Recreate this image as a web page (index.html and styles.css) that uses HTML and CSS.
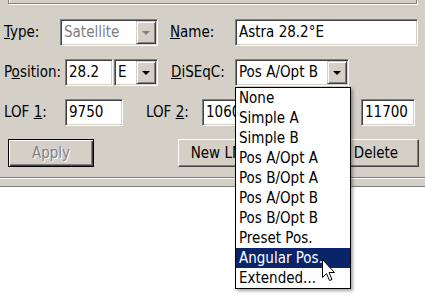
FILE: index.html
```html
<!DOCTYPE html>
<html lang="en">
<head>
  <meta charset="UTF-8" />
  <title>Satellite Settings</title>
  <link rel="stylesheet" href="styles.css">
</head>
<body>
  <div class="panel">
    <div class="topbox"></div>

    <div class="form">
      <div class="row">
        <label class="lbl w-type"><u>T</u>ype:</label>
        <div class="combo disabled c-type">
          <span class="val">Satellite</span>
          <span class="drop"><i class="arrow"></i></span>
        </div>
        <label class="lbl w-name"><u>N</u>ame:</label>
        <div class="edit e-name">Astra 28.2°E</div>
      </div>

      <div class="row">
        <label class="lbl w-pos">P<u>o</u>sition:</label>
        <div class="edit e-pos">28.2</div>
        <div class="combo c-dir">
          <span class="val">E</span>
          <span class="drop"><i class="arrow"></i></span>
        </div>
        <label class="lbl w-diseqc"><u>D</u>iSEqC:</label>
        <div class="combo c-diseqc">
          <span class="val">Pos A/Opt B</span>
          <span class="drop"><i class="arrow"></i></span>
        </div>
      </div>

      <div class="row">
        <label class="lbl w-pos">LOF <u>1</u>:</label>
        <div class="edit e-lof1">9750</div>
        <label class="lbl w-lof2">LOF <u>2</u>:</label>
        <div class="edit e-lof2">10600</div>
        <label class="lbl w-lof3">LOF <u>3</u>:</label>
        <div class="edit e-lof3">11700</div>
      </div>

      <div class="row buttons">
        <button class="btn default" disabled>Apply</button>
        <button class="btn b-new">New LNB</button>
        <button class="btn b-del">Delete</button>
      </div>
    </div>

    <div class="sep"></div>
  </div>

  <ul class="list">
    <li>None</li>
    <li>Simple A</li>
    <li>Simple B</li>
    <li>Pos A/Opt A</li>
    <li>Pos B/Opt A</li>
    <li>Pos A/Opt B</li>
    <li>Pos B/Opt B</li>
    <li>Preset Pos.</li>
    <li class="selected">Angular Pos.</li>
    <li>Extended...</li>
  </ul>

  <svg class="cursor" width="14" height="24" viewBox="0 0 14 24">
    <path d="M0.5 0.5 L0.5 18.5 L4.5 14.5 L7.5 21.5 L10 20.5 L7 13.5 L12.5 13.5 Z" fill="#fff" stroke="#000" stroke-width="1"/>
  </svg>
</body>
</html>
```

FILE: styles.css
```css
body {
  margin: 0;
  background: #ffffff;
  font-family: "DejaVu Sans Condensed", "DejaVu Sans", sans-serif;
  font-size: 15px;
  color: #000;
}
.panel {
  background: #d4d0c8;
  height: 187px;
  box-sizing: border-box;
  border-bottom: 1px solid #808080;
  position: relative;
}
.topbox {
  margin: 0 8px 0 8px;
  height: 3px;
  border: 1px solid #808080;
  border-top: none;
  box-shadow: 1px 1px 0 #fff, inset 1px 0 0 #fff;
}
.form {
  padding-top: 15px;
}
.row {
  display: flex;
  align-items: center;
  height: 27px;
  margin-bottom: 13px;
  padding-left: 4px;
}
.lbl {
  line-height: 27px;
  white-space: nowrap;
}
.w-type { width: 56px; }
.w-name { width: 65px; margin-left: 12px; }
.w-pos { width: 61px; }
.w-diseqc { width: 64px; margin-left: 13px; }
.w-lof2 { width: 56px; margin-left: 23px; }
.w-lof3 { margin-left: auto; margin-right: 10px; }

.edit,
.combo {
  box-sizing: border-box;
  height: 27px;
  background: #fff;
  border-top: 1px solid #808080;
  border-left: 1px solid #808080;
  border-bottom: 1px solid #fff;
  border-right: 1px solid #fff;
  box-shadow: inset 1px 1px 0 #404040, inset -1px -1px 0 #d4d0c8;
  padding: 0 3px;
  line-height: 25px;
  white-space: nowrap;
  overflow: hidden;
}
.e-name { width: 183px; }
.e-pos { width: 48px; }
.e-lof1 { width: 58px; }
.e-lof2 { width: 60px; }
.e-lof3 { width: 54px; margin-right: 10px; }

.combo {
  display: flex;
  padding: 1px 1px 1px 3px;
  line-height: 23px;
}
.combo .val {
  flex: 1;
  overflow: hidden;
}
.c-type { width: 98px; }
.c-dir { width: 44px; margin-left: 1px; }
.c-diseqc { width: 114px; }
.disabled .val { color: #808080; }

.drop {
  width: 20px;
  height: 23px;
  box-sizing: border-box;
  background: #d4d0c8;
  border-top: 1px solid #d4d0c8;
  border-left: 1px solid #d4d0c8;
  border-right: 1px solid #404040;
  border-bottom: 1px solid #404040;
  box-shadow: inset 1px 1px 0 #fff, inset -1px -1px 0 #808080;
  display: flex;
  align-items: center;
  justify-content: center;
}
.arrow {
  width: 0;
  height: 0;
  border-left: 4px solid transparent;
  border-right: 4px solid transparent;
  border-top: 4px solid #000;
}
.disabled .arrow { border-top-color: #808080; }

.buttons {
  padding-left: 8px;
  height: 28px;
  margin-bottom: 10px;
}
.btn {
  box-sizing: border-box;
  width: 86px;
  height: 28px;
  font: inherit;
  color: #000;
  background: #d4d0c8;
  border-top: 1px solid #fff;
  border-left: 1px solid #fff;
  border-right: 1px solid #404040;
  border-bottom: 1px solid #404040;
  box-shadow: inset -1px -1px 0 #808080;
  padding: 0;
}
.btn.default {
  border: 1px solid #000;
  box-shadow: inset 1px 1px 0 #fff, inset -1px -1px 0 #404040, inset -2px -2px 0 #808080;
}
.btn:disabled {
  color: #808080;
  text-shadow: 1px 1px 0 #fff;
}
.b-new { margin-left: 84px; }
.b-del { margin-left: auto; margin-right: 6px; }

.sep {
  margin-top: 0;
  height: 1px;
  background: #808080;
  border-bottom: 1px solid #fff;
}

.list {
  position: absolute;
  left: 235px;
  top: 87px;
  width: 116px;
  box-sizing: border-box;
  margin: 0;
  padding: 0;
  list-style: none;
  background: #fff;
  border: 1px solid #000;
  box-shadow: 2px 2px 3px rgba(0, 0, 0, 0.35);
}
.list li {
  height: 20px;
  line-height: 20px;
  padding-left: 3px;
  white-space: nowrap;
}
.list li.selected {
  background: #0a246a;
  color: #fff;
}
.cursor {
  position: absolute;
  left: 322px;
  top: 259px;
}
```
